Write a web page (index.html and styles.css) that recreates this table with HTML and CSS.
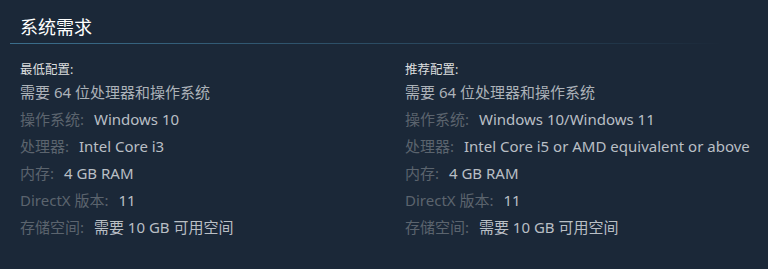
FILE: index.html
```html
<!DOCTYPE html>
<html lang="zh-CN">
<head>
<meta charset="utf-8">
<link rel="stylesheet" href="styles.css">
</head>
<body>
<section class="sysreq">
  <h2 class="title">系统需求</h2>
  <div class="cols">
    <div class="col">
      <div class="head">最低配置:</div>
      <ul class="list">
        <li class="note">需要 64 位处理器和操作系统</li>
        <li><span class="k">操作系统:</span> <span class="v">Windows 10</span></li>
        <li><span class="k">处理器:</span> <span class="v">Intel Core i3</span></li>
        <li><span class="k">内存:</span> <span class="v">4 GB RAM</span></li>
        <li><span class="k">DirectX 版本:</span> <span class="v">11</span></li>
        <li><span class="k">存储空间:</span> <span class="v">需要 10 GB 可用空间</span></li>
      </ul>
    </div>
    <div class="col">
      <div class="head">推荐配置:</div>
      <ul class="list">
        <li class="note">需要 64 位处理器和操作系统</li>
        <li><span class="k">操作系统:</span> <span class="v">Windows 10/Windows 11</span></li>
        <li><span class="k">处理器:</span> <span class="v">Intel Core i5 or AMD equivalent or above</span></li>
        <li><span class="k">内存:</span> <span class="v">4 GB RAM</span></li>
        <li><span class="k">DirectX 版本:</span> <span class="v">11</span></li>
        <li><span class="k">存储空间:</span> <span class="v">需要 10 GB 可用空间</span></li>
      </ul>
    </div>
  </div>
</section>
</body>
</html>
```

FILE: styles.css
```css
html, body {
  margin: 0;
  padding: 0;
  background: #1b2838;
  height: 100%;
}
body {
  font-family: "Noto Sans", "Noto Sans CJK SC", sans-serif;
  color: #acb2b8;
}
.sysreq {
  padding: 14px 8px 0 10px;
}
.title {
  margin: 0;
  padding: 0 0 4px 10px;
  font-size: 18px;
  line-height: 26px;
  font-weight: normal;
  color: #ffffff;
  background-image: linear-gradient(to right, #3b6e8c 0%, rgba(59,110,140,0.45) 55%, rgba(59,110,140,0.15) 85%, rgba(59,110,140,0) 95%);
  background-repeat: no-repeat;
  background-size: 100% 1px;
  background-position: left bottom;
}
.cols {
  display: grid;
  grid-template-columns: 385px 1fr;
  padding: 17px 0 0 10px;
}
.head {
  font-size: 12.5px;
  line-height: 18px;
  color: #dcdedf;
}
.list {
  list-style: none;
  margin: 0;
  padding: 0;
}
.list li {
  font-size: 15px;
  line-height: 27px;
  white-space: nowrap;
}
.note {
  color: #acb2b8;
}
.k {
  color: #5b646e;
  margin-right: 6px;
}
.v {
  color: #b9bfc5;
}
```
